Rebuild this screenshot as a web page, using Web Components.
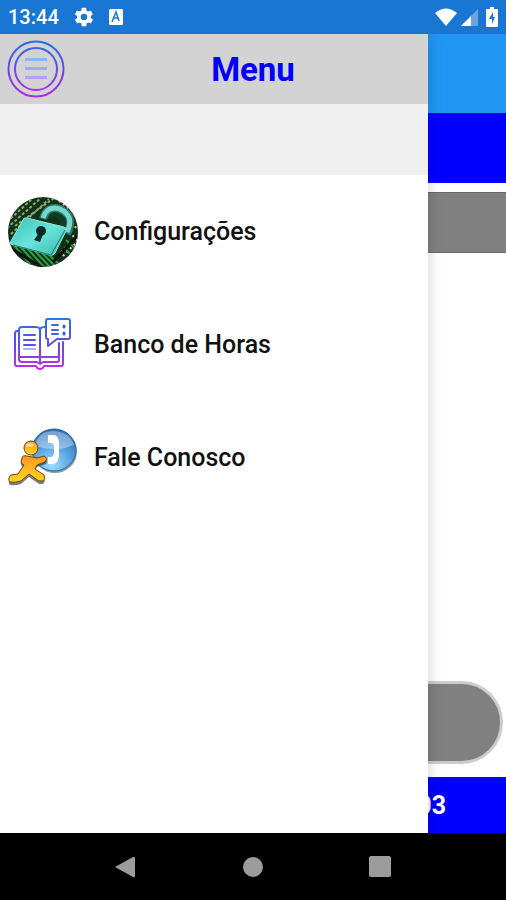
<!DOCTYPE html>
<html lang="pt-BR">
<head>
<meta charset="utf-8">
<meta name="viewport" content="width=device-width, initial-scale=1">
<title>Menu</title>
<style>
  html, body { height: 100%; margin: 0; }
  body { font-family: Roboto, "Liberation Sans", sans-serif; color: #111; }
</style>
</head>
<body>
<app-shell>
  <status-bar slot="status" time="13:44"></status-bar>
  <home-page slot="page"></home-page>
  <side-drawer slot="drawer" heading="Menu">
    <menu-item label="Configurações">
      <svg width="72" height="72" viewBox="0 0 72 72" aria-hidden="true">
        <defs>
          <clipPath id="disc"><circle cx="36" cy="36" r="35"/></clipPath>
          <linearGradient id="body" x1="0" y1="0" x2="1" y2="1">
            <stop offset="0" stop-color="#3fbfae"/><stop offset=".5" stop-color="#68e4dc"/><stop offset="1" stop-color="#3bb8a9"/>
          </linearGradient>
        </defs>
        <g clip-path="url(#disc)">
          <rect width="72" height="72" fill="#12301a"/>
          <g fill="none" stroke="#86ad6c" stroke-width="2" stroke-dasharray="3 2">
            <path d="M0 32L34 2M0 26L26 2M4 38L42 3M2 20L18 4M8 30L50 0"/>
          </g>
          <g fill="none" stroke="#d2d79a" stroke-width="2" stroke-dasharray="2 3">
            <path d="M48 2L72 20M55 2L72 14M60 24L72 34M62 36L72 46M56 60L72 44M60 66L72 54M54 56L72 38"/>
          </g>
          <g fill="none" stroke="#2d9c45" stroke-width="2">
            <path d="M6 48L26 72M13 50L32 72M20 52L38 72M27 54L44 72M34 56L50 72M41 58L56 72M58 52L66 62M59 44L70 54"/>
          </g>
          <path d="M0 50L36 72M46 66L70 40" stroke="#071409" stroke-width="3" fill="none"/>
          <path d="M38 17Q45 10 56 15Q66 23 60 35L52 31Q54 23 49 21Q44 20 41 25Z" fill="#123d22"/>
          <path d="M36 23Q40 9 53 13Q69 20 60 38" fill="none" stroke="#287b71" stroke-width="8"/>
          <path d="M36 22Q40 9 53 13Q68 20 60 36" fill="none" stroke="#75d8ca" stroke-width="5"/>
          <path d="M20 22L57 31Q60 32 59 35L48 57Q46 60 43 59L6 49Q2 48 4 45L16 24Q17 21 20 22Z" fill="url(#body)" stroke="#8becdf"/>
          <path d="M6 49L44 59L58 34" fill="none" stroke="#17766c"/>
          <circle cx="34" cy="35" r="5" fill="#0b2a25"/>
          <path d="M32 37L27 44L33 46L36 38Z" fill="#0b2a25"/>
        </g>
      </svg>
    </menu-item>
    <menu-item label="Banco de Horas">
      <svg width="72" height="72" viewBox="0 0 72 72" fill="none" stroke-width="2" stroke-linejoin="round" stroke-linecap="round" aria-hidden="true">
        <defs>
          <linearGradient id="ink" gradientUnits="userSpaceOnUse" x1="0" y1="10" x2="0" y2="60">
            <stop offset="0" stop-color="#2378ec"/><stop offset=".45" stop-color="#5b4fe0"/><stop offset="1" stop-color="#c02be8"/>
          </linearGradient>
        </defs>
        <g stroke="url(#ink)">
          <path d="M15 18H29Q32 18 33 20Q34 18 38 18M15 18Q12 18 12 21V50Q12 53 15 53H30L33 55L36 53H50Q52 53 52 51V34M33 20V53M12 48H52"/>
          <path d="M12 22H10Q8 22 8 25V55Q8 57 10 57H29Q30 60 33 60Q36 60 37 57H54Q56 57 56 55V33"/>
          <path d="M41 10H61Q63 10 63 12V28Q63 30 61 30H50L41 37V30Q39 30 39 28V12Q39 10 41 10Z" fill="#fff"/>
          <path d="M17 26H28M17 31H28M17 36H28M45 16H51M45 21H51M45 25H51"/>
          <path d="M17 40H28" stroke="#9fb7fb"/>
        </g>
        <path d="M57 17V18M57 24V25" stroke="#365fe5" stroke-width="3"/>
      </svg>
    </menu-item>
    <menu-item label="Fale Conosco">
      <svg width="72" height="72" viewBox="0 0 72 72" aria-hidden="true">
        <defs>
          <radialGradient id="globe" cx=".45" cy=".85" r=".85">
            <stop offset="0" stop-color="#9bdfff"/><stop offset=".55" stop-color="#559fdf"/><stop offset="1" stop-color="#2a6cb0"/>
          </radialGradient>
          <linearGradient id="runner" x1="0" y1="0" x2="0" y2="1">
            <stop offset="0" stop-color="#ff981f"/><stop offset="1" stop-color="#ffd71f"/>
          </linearGradient>
        </defs>
        <ellipse cx="48" cy="30" rx="22" ry="21" fill="#14395d" opacity=".5"/>
        <ellipse cx="47" cy="28" rx="22" ry="21" fill="url(#globe)" stroke="#2b639a"/>
        <path d="M28 24Q31 9 47 9Q63 10 67 23Q49 31 28 24Z" fill="#fff" opacity=".35"/>
        <path d="M41 13H46Q52 13 52 22V32Q52 42 45 42H41V35H45L47 32V24L45 21H41Z" fill="#fff"/>
        <path d="M15 38Q15 35 20 36L30 38L38 36Q41 38 39 42L30 45L28 49L37 56Q39 59 36 62L32 62L22 55L14 62Q8 64 3 63Q0 60 4 56L11 55L17 46L14 43Z" fill="#1f2937" opacity=".6"/>
        <g stroke="#6b4310" stroke-linejoin="round">
          <path d="M15 36Q15 33 20 34L30 36L37 34Q41 36 38 40L30 43L28 47L37 53Q39 57 36 59L32 59L22 52L14 59Q8 61 3 60Q0 57 4 53L11 52L17 43L14 41Z" fill="url(#runner)"/>
          <circle cx="24" cy="26" r="7" fill="url(#runner)"/>
        </g>
        <ellipse cx="23" cy="23" rx="4" ry="2" fill="#ffd792"/>
      </svg>
    </menu-item>
  </side-drawer>
  <nav-bar slot="nav"></nav-bar>
</app-shell>

<script>
class AppShell extends HTMLElement {
  constructor() {
    super();
    this.attachShadow({ mode: "open" }).innerHTML = /* html */`
      <style>
        :host { display: flex; flex-direction: column; min-height: 100vh; background: #fff; }
        main { position: relative; display: flex; flex: 1; overflow: hidden; }
        slot[name="page"]::slotted(*) { flex: 1; }
        /* the open drawer lies over the page */
        slot[name="drawer"]::slotted(*) { position: absolute; inset: 0 78px 0 0; }
      </style>
      <slot name="status"></slot>
      <main>
        <slot name="page"></slot>
        <slot name="drawer"></slot>
      </main>
      <slot name="nav"></slot>
    `;
  }
}

class StatusBar extends HTMLElement {
  constructor() {
    super();
    this.attachShadow({ mode: "open" });
  }

  connectedCallback() {
    this.shadowRoot.innerHTML = /* html */`
      <style>
        :host {
          display: flex;
          align-items: center;
          height: 34px;
          padding: 0 8px;
          background: #1976d2;
          color: #fff;
          font-size: 20px;
          font-weight: 500;
        }
        .left, .right { display: flex; align-items: center; }
        .left { flex: 1; gap: 14px; }
        .right { gap: 4px; }
        svg { display: block; fill: #fff; }
        .battery { margin-left: 4px; }
      </style>
      <div class="left">
        <time>${this.getAttribute("time")}</time>
        <svg width="22" height="22" viewBox="0 0 24 24"><path d="M19.4 13a7.500 7.500 0 0 0 0-2l2.100-1.600a.5.5 0 0 0 .1-.6l-2-3.500a.5.5 0 0 0-.6-.2l-2.500 1a7 7 0 0 0-1.700-1l-.4-2.600a.5.5 0 0 0-.5-.5h-4a.5.5 0 0 0-.5.5L9 5.100a7 7 0 0 0-1.700 1l-2.500-1a.5.5 0 0 0-.6.2l-2 3.500a.5.5 0 0 0 .1.6L4.500 11a7.500 7.500 0 0 0 0 2l-2.100 1.600a.5.5 0 0 0-.1.6l2 3.500c.1.2.4.3.6.2l2.500-1a7 7 0 0 0 1.700 1l.4 2.600c0 .3.200.5.5.5h4c.3 0 .5-.2.5-.5l.4-2.600a7 7 0 0 0 1.700-1l2.500 1c.2.1.5 0 .6-.2l2-3.500a.5.5 0 0 0-.1-.6zM12 15.500a3.500 3.500 0 1 1 0-7 3.500 3.500 0 0 1 0 7z"/></svg>
        <svg width="14" height="16" viewBox="0 0 14 16"><rect width="14" height="16" rx="1"/><path d="M3 13L7 3L10 12M5 9H9" fill="none" stroke="#1976d2" stroke-width="1.500"/></svg>
      </div>
      <div class="right">
        <svg width="22" height="18" viewBox="0 0 22 18"><path d="M0 5Q11-4 22 5L11 18Z"/></svg>
        <svg width="17" height="17" viewBox="0 0 17 17"><path d="M0 17L17 0V17Z" opacity=".35"/><path d="M0 17L10 7V17Z"/></svg>
        <svg class="battery" width="12" height="20" viewBox="0 0 12 20"><path d="M4 0H8V2H11Q12 2 12 3V19Q12 20 11 20H1Q0 20 0 19V3Q0 2 1 2H4Z"/><path d="M7 5L3 12H6V17L9 10H7Z" fill="#1976d2"/></svg>
      </div>
    `;
  }
}

class HomePage extends HTMLElement {
  constructor() {
    super();
    this.attachShadow({ mode: "open" }).innerHTML = /* html */`
      <style>
        :host { display: flex; flex-direction: column; background: #fff; }
        header { height: 79px; background: #2196f3; }
        .banner { height: 70px; background: #00f; }
        button { display: block; box-sizing: border-box; background: #808080; }
        .field { height: 61px; margin-top: 9px; border: 0 solid #696969; border-width: 1px 0; }
        .action { height: 83px; margin: auto 3px 13px; border: 3px solid #ccc; border-radius: 42px; }
        footer {
          display: flex;
          align-items: center;
          justify-content: flex-end;
          height: 56px;
          padding-right: 60px;
          background: #00f;
          color: #fff;
          font-size: 25px;
          font-weight: 700;
        }
      </style>
      <header></header>
      <div class="banner"></div>
      <button class="field" type="button" aria-label="Selecionar"></button>
      <button class="action" type="button" aria-label="Registrar"></button>
      <footer>03</footer>
    `;
  }
}

class SideDrawer extends HTMLElement {
  constructor() {
    super();
    this.attachShadow({ mode: "open" });
  }

  connectedCallback() {
    this.shadowRoot.innerHTML = /* html */`
      <style>
        :host { display: block; background: #fff; box-shadow: 0 0 14px rgba(0, 0, 0, .2); }
        header { display: flex; align-items: center; height: 70px; background: #d3d3d3; }
        button { display: block; width: 78px; padding: 0 7px; border: 0; background: none; cursor: pointer; }
        svg { display: block; }
        h1 { flex: 1; margin: 0; text-align: center; font-size: 33px; font-weight: 700; color: #00f; }
        .strip { height: 71px; background: #f0f0f0; }
        nav { display: flex; flex-direction: column; }
      </style>
      <header>
        <button type="button" aria-label="Fechar menu">
          <svg width="58" height="58" viewBox="0 0 58 58" fill="none">
            <defs>
              <linearGradient id="ring" gradientUnits="userSpaceOnUse" x1="0" y1="0" x2="0" y2="58">
                <stop offset="0" stop-color="#1f6fe5"/><stop offset="1" stop-color="#b824e0"/>
              </linearGradient>
              <linearGradient id="line" gradientUnits="userSpaceOnUse" x1="0" y1="18" x2="0" y2="40">
                <stop offset="0" stop-color="#8ab8f6"/><stop offset="1" stop-color="#b4a0fa"/>
              </linearGradient>
            </defs>
            <circle cx="29" cy="29" r="27.500" stroke="url(#ring)" stroke-width="2"/>
            <circle cx="29" cy="29" r="21" stroke="url(#ring)" stroke-width="2"/>
            <path d="M18 18H40V21H18ZM18 27H40V30H18ZM18 36H40V39H18Z" fill="url(#line)"/>
          </svg>
        </button>
        <h1>${this.getAttribute("heading")}</h1>
      </header>
      <div class="strip"></div>
      <nav><slot></slot></nav>
    `;
  }
}

class MenuItem extends HTMLElement {
  constructor() {
    super();
    this.attachShadow({ mode: "open" });
  }

  connectedCallback() {
    this.shadowRoot.innerHTML = /* html */`
      <style>
        :host { display: block; }
        a {
          display: flex;
          align-items: center;
          gap: 15px;
          height: 113px;
          padding: 0 7px;
          color: inherit;
          font-size: 25px;
          font-weight: 500;
          text-decoration: none;
        }
        ::slotted(svg) { display: block; flex-shrink: 0; }
      </style>
      <a href="#"><slot></slot><span>${this.getAttribute("label")}</span></a>
    `;
  }
}

class NavBar extends HTMLElement {
  constructor() {
    super();
    this.attachShadow({ mode: "open" }).innerHTML = /* html */`
      <style>
        :host {
          display: flex;
          align-items: center;
          justify-content: center;
          gap: 103px;
          height: 67px;
          background: #000;
        }
        button { width: 24px; height: 24px; padding: 0; border: 0; background: none; }
        svg { display: block; fill: #9c9c9c; }
      </style>
      <button type="button" aria-label="Voltar"><svg width="24" height="24"><path d="M1 12L19 2Q21 1 21 3V21Q21 23 19 22Z"/></svg></button>
      <button type="button" aria-label="Início"><svg width="24" height="24"><circle cx="12" cy="12" r="10"/></svg></button>
      <button type="button" aria-label="Recentes"><svg width="24" height="24"><rect x="1" y="1" width="22" height="21" rx="2"/></svg></button>
    `;
  }
}

customElements.define("app-shell", AppShell);
customElements.define("status-bar", StatusBar);
customElements.define("home-page", HomePage);
customElements.define("side-drawer", SideDrawer);
customElements.define("menu-item", MenuItem);
customElements.define("nav-bar", NavBar);
</script>
</body>
</html>
